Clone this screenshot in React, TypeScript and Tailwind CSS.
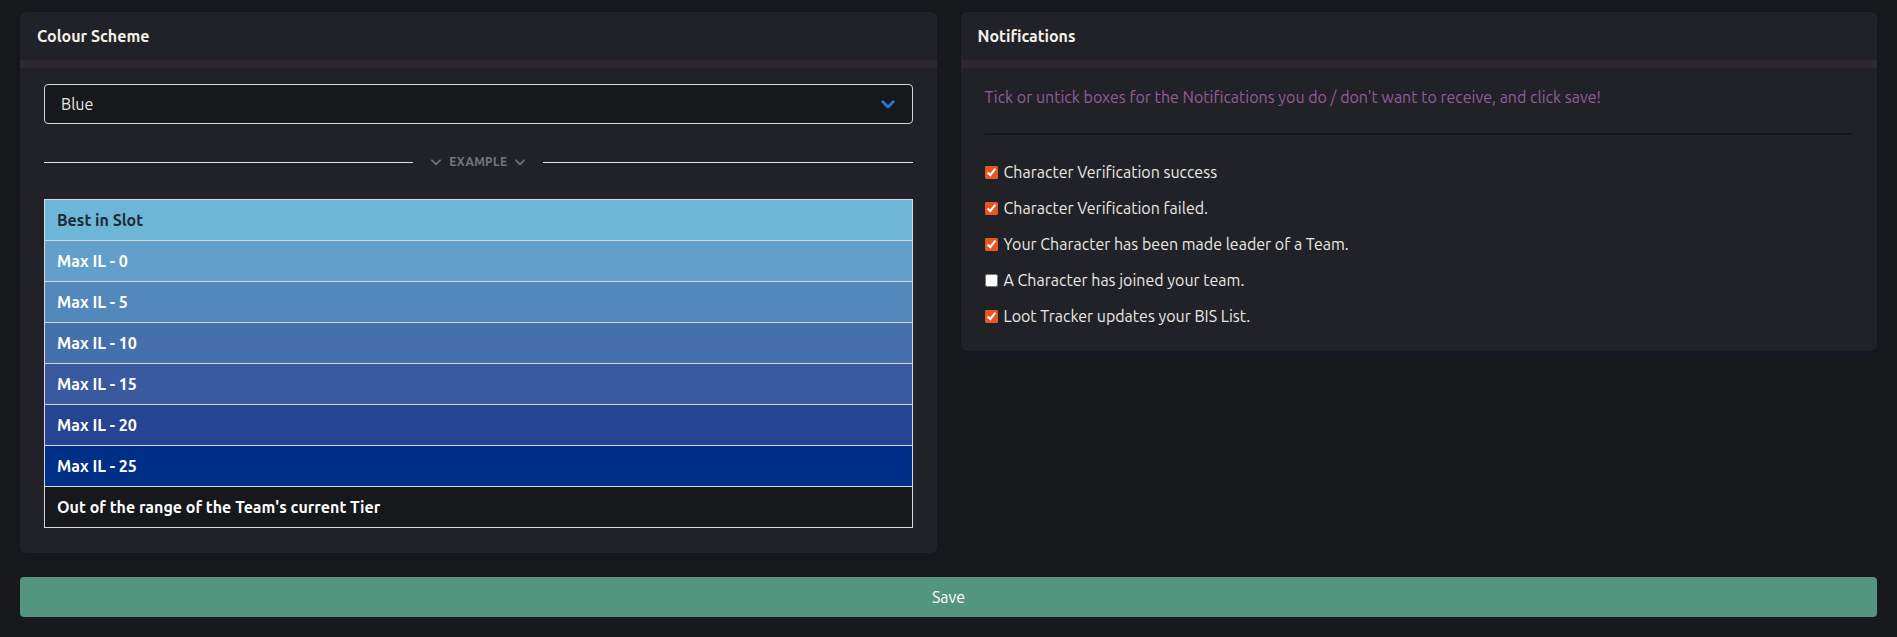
import { useState } from "react";

const rows = [
  { label: "Best in Slot", bg: "bg-[#6eb6d8]", text: "text-[#1f2a36]" },
  { label: "Max IL - 0", bg: "bg-[#62a0cb]", text: "text-white" },
  { label: "Max IL - 5", bg: "bg-[#5388bc]", text: "text-white" },
  { label: "Max IL - 10", bg: "bg-[#4670ad]", text: "text-white" },
  { label: "Max IL - 15", bg: "bg-[#3a5aa0]", text: "text-white" },
  { label: "Max IL - 20", bg: "bg-[#254494]", text: "text-white" },
  { label: "Max IL - 25", bg: "bg-[#002f87]", text: "text-white" },
  { label: "Out of the range of the Team's current Tier", bg: "bg-[#17181c]", text: "text-white" },
];

const initialNotifications = [
  { label: "Character Verification success", checked: true },
  { label: "Character Verification failed.", checked: true },
  { label: "Your Character has been made leader of a Team.", checked: true },
  { label: "A Character has joined your team.", checked: false },
  { label: "Loot Tracker updates your BIS List.", checked: true },
];

const Chevron = ({ className, width = 3.5 }: { className?: string; width?: number }) => (
  <svg viewBox="0 0 24 24" className={className} fill="none" stroke="currentColor" strokeWidth={width} strokeLinecap="round" strokeLinejoin="round">
    <path d="M5 9l7 7 7-7" />
  </svg>
);

const CardHeader = ({ title }: { title: string }) => (
  <div>
    <div className="h-12 flex items-center pl-[17px] font-bold text-base text-[#f4f1ea]">{title}</div>
    <div className="h-2 bg-[#2e282f]" />
  </div>
);

export default function App() {
  const [notifications, setNotifications] = useState(initialNotifications);

  const toggle = (i: number) =>
    setNotifications((prev) => prev.map((n, idx) => (idx === i ? { ...n, checked: !n.checked } : n)));

  return (
    <div
      className="min-h-screen bg-[#18191d] px-5 pt-3 pb-[22px] text-[#ece9e2]"
      style={{ fontFamily: "Ubuntu, 'Open Sans', sans-serif" }}
    >
      <div className="grid grid-cols-2 gap-6 items-start">
        <div className="bg-[#212227] rounded-md shadow-[0_3px_4px_rgba(20,24,40,0.6)] overflow-hidden">
          <CardHeader title="Colour Scheme" />
          <div className="px-6 pt-4 pb-[25px]">
            <div className="h-10 flex items-center justify-between border border-[#d6d6d6] rounded-[4px] bg-[#17181c] pl-4 pr-[15px] text-base">
              <span>Blue</span>
              <Chevron className="w-[18px] h-[18px] text-[#2f74d0]" width={4} />
            </div>

            <div className="h-4 flex items-center mt-[30px] mb-[29px]">
              <div className="flex-1 h-px bg-[#e2e2e2]" />
              <div className="flex items-center gap-1.5 px-4 text-xs leading-4 font-bold tracking-wide text-[#75767a]">
                <Chevron className="w-[14px] h-[14px]" width={3} />
                <span>EXAMPLE</span>
                <Chevron className="w-[14px] h-[14px]" width={3} />
              </div>
              <div className="flex-1 h-px bg-[#e2e2e2]" />
            </div>

            <div className="border border-[#d8d8d8]">
              {rows.map((r, i) => (
                <div
                  key={r.label}
                  className={`flex items-center pl-3 font-bold text-base ${r.bg} ${r.text} ${i > 0 ? "h-[41px] border-t border-[#d8d8d8]" : "h-10"}`}
                >
                  {r.label}
                </div>
              ))}
            </div>
          </div>
        </div>

        <div className="bg-[#212227] rounded-md shadow-[0_3px_4px_rgba(20,24,40,0.6)] overflow-hidden">
          <CardHeader title="Notifications" />
          <div className="px-6 pt-[17px] pb-[23px]">
            <p className="text-base text-[#935c9c]">
              Tick or untick boxes for the Notifications you do / don't want to receive, and click save!
            </p>
            <div className="h-0.5 bg-[#18181c] mt-[24px] mb-[25px]" />
            <div className="flex flex-col gap-3">
              {notifications.map((n, i) => (
                <label key={n.label} className="h-6 flex items-center gap-1.5 text-base cursor-pointer">
                  <input
                    type="checkbox"
                    checked={n.checked}
                    onChange={() => toggle(i)}
                    className="w-[13px] h-[13px] m-0 accent-[#e95420]"
                  />
                  <span>{n.label}</span>
                </label>
              ))}
            </div>
          </div>
        </div>
      </div>

      <button className="mt-6 w-full h-10 rounded-[4px] bg-[#54957f] text-white text-base">Save</button>
    </div>
  );
}
